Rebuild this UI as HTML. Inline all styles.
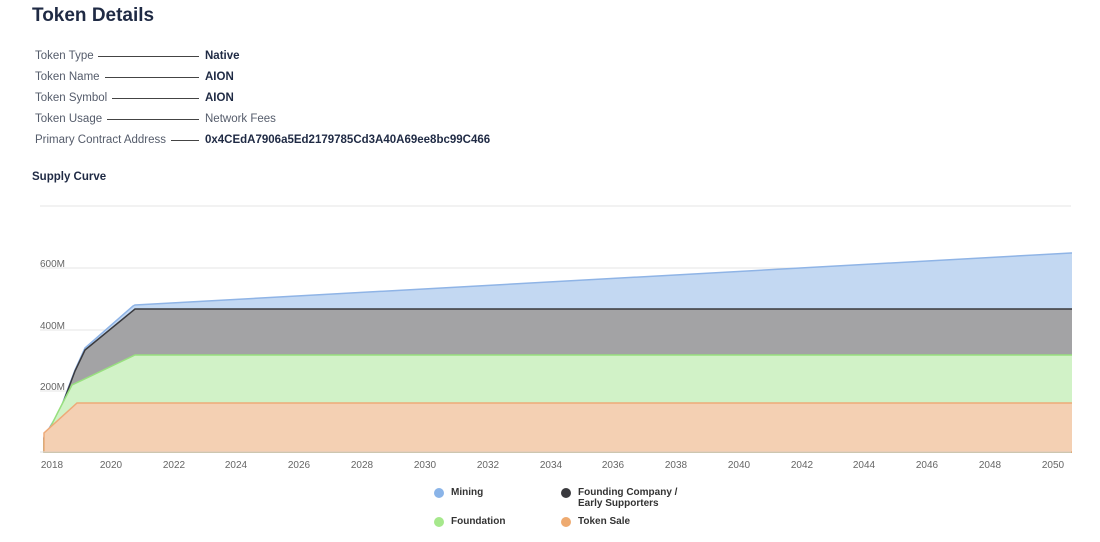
<!DOCTYPE html>
<html><head><meta charset="utf-8"><style>
body{margin:0;background:#fff;font-family:"Liberation Sans",sans-serif;color:#1f2a44;width:1100px;height:542px;overflow:hidden;position:relative}
h1{position:absolute;left:32px;top:5px;margin:0;font-size:19px;font-weight:bold;color:#1f2a44}
.row{position:absolute;left:35px;font-size:11.5px;line-height:16px;color:#555c6b;height:16px;white-space:nowrap}
.row .ln{position:absolute;top:8px;height:1px;background:#444}
.v{position:absolute;left:205px;font-size:11.5px;line-height:16px;font-weight:bold;color:#1f2a44}
.sc{position:absolute;left:32px;top:171px;font-size:11.5px;font-weight:bold}
.ax{font-size:10px;fill:#666}
.lg{position:absolute;font-size:10px;font-weight:bold;color:#333;display:flex;align-items:flex-start}
.dot{width:10px;height:10px;border-radius:50%;margin-right:7px;margin-top:1px}
</style></head><body>
<h1>Token Details</h1>
<div class="row" style="top:48px">Token Type<span class="ln" style="left:63px;width:101px"></span></div><div class="v" style="top:48px">Native</div>
<div class="row" style="top:69px">Token Name<span class="ln" style="left:70px;width:94px"></span></div><div class="v" style="top:69px">AION</div>
<div class="row" style="top:90px">Token Symbol<span class="ln" style="left:77px;width:87px"></span></div><div class="v" style="top:90px">AION</div>
<div class="row" style="top:111px">Token Usage<span class="ln" style="left:72px;width:92px"></span></div><div class="v" style="top:111px;font-weight:normal;color:#555c6b">Network Fees</div>
<div class="row" style="top:132px">Primary Contract Address<span class="ln" style="left:136px;width:28px"></span></div><div class="v" style="top:132px">0x4CEdA7906a5Ed2179785Cd3A40A69ee8bc99C466</div>
<div class="sc">Supply Curve</div>
<svg width="1100" height="542" style="position:absolute;left:0;top:0">
<g stroke="#e6e6e6" stroke-width="1">
<line x1="40" y1="206" x2="1071" y2="206"/><line x1="40" y1="268" x2="1071" y2="268"/>
<line x1="40" y1="330" x2="1071" y2="330"/><line x1="40" y1="391" x2="1071" y2="391"/>
</g>
<text class="ax" x="40" y="267">600M</text><text class="ax" x="40" y="329">400M</text><text class="ax" x="40" y="390">200M</text>
<polygon points="44,452 44,437 60,410 75,370 85,348 133,306 135,305 1071,253 1073,253 1073,452" fill="#c3d8f2" stroke="#8fb4e6" stroke-width="1.5"/>
<polygon points="44,452 44,438 60,411 75,371 85,350 135,309 1073,309 1073,452" fill="#a3a3a5" stroke="#3a3a3e" stroke-width="1.5"/>
<polygon points="44,452 44,440 58,412 72,385 135,355 1073,355 1073,452" fill="#d1f2c7" stroke="#98e07f" stroke-width="1.5"/>
<polygon points="44,452 44,433 77,403 1073,403 1073,452" fill="#f4d0b3" stroke="#eeaa78" stroke-width="1.5"/>
<rect x="1072" y="240" width="20" height="220" fill="#fff"/>
<line x1="40" y1="452" x2="1071" y2="452" stroke="#ddd"/>
<g class="ax" text-anchor="middle">
<text x="52" y="468">2018</text><text x="111" y="468">2020</text><text x="174" y="468">2022</text><text x="236" y="468">2024</text><text x="299" y="468">2026</text><text x="362" y="468">2028</text><text x="425" y="468">2030</text><text x="488" y="468">2032</text><text x="551" y="468">2034</text><text x="613" y="468">2036</text><text x="676" y="468">2038</text><text x="739" y="468">2040</text><text x="802" y="468">2042</text><text x="864" y="468">2044</text><text x="927" y="468">2046</text><text x="990" y="468">2048</text><text x="1053" y="468">2050</text>
</g>
</svg>
<div class="lg" style="left:434px;top:487px"><span class="dot" style="background:#8ab4e8"></span>Mining</div>
<div class="lg" style="left:561px;top:487px"><span class="dot" style="background:#3a3a3e"></span>Founding Company /<br>Early Supporters</div>
<div class="lg" style="left:434px;top:516px"><span class="dot" style="background:#a6e88c"></span>Foundation</div>
<div class="lg" style="left:561px;top:516px"><span class="dot" style="background:#eeaa70"></span>Token Sale</div>
</body></html>
